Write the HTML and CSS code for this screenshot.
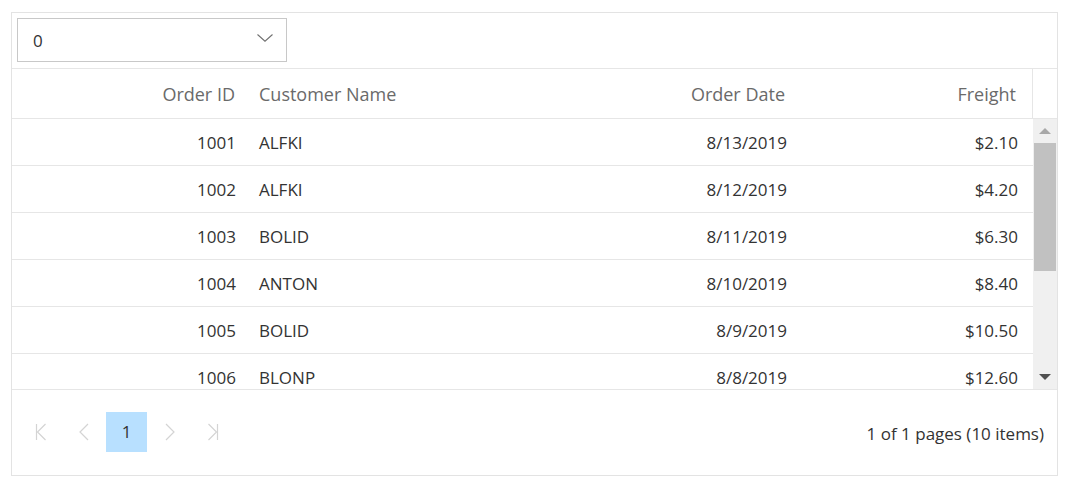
FILE: index.html
```html
<!DOCTYPE html>
<html lang="en">
<head>
<meta charset="utf-8">
<title>Orders grid</title>
<link rel="stylesheet" href="styles.css">
</head>
<body>
<div class="grid">
  <div class="toolbar">
    <div class="dropdown">
      <span class="dd-value">0</span>
      <svg class="dd-icon" width="16" height="8" viewBox="0 0 16 8"><polyline points="0.5,0.5 8,7.2 15.5,0.5" fill="none" stroke="#707070" stroke-width="1.1"/></svg>
    </div>
  </div>
  <div class="header">
    <div class="cols hcols">
      <div class="hc c1">Order ID</div>
      <div class="hc c2">Customer Name</div>
      <div class="hc c3">Order Date</div>
      <div class="hc c4">Freight</div>
    </div>
    <div class="hspacer"></div>
  </div>
  <div class="content">
    <div class="rows">
      <div class="cols row"><div class="dc c1">1001</div><div class="dc c2">ALFKI</div><div class="dc c3">8/13/2019</div><div class="dc c4">$2.10</div></div>
      <div class="cols row"><div class="dc c1">1002</div><div class="dc c2">ALFKI</div><div class="dc c3">8/12/2019</div><div class="dc c4">$4.20</div></div>
      <div class="cols row"><div class="dc c1">1003</div><div class="dc c2">BOLID</div><div class="dc c3">8/11/2019</div><div class="dc c4">$6.30</div></div>
      <div class="cols row"><div class="dc c1">1004</div><div class="dc c2">ANTON</div><div class="dc c3">8/10/2019</div><div class="dc c4">$8.40</div></div>
      <div class="cols row"><div class="dc c1">1005</div><div class="dc c2">BOLID</div><div class="dc c3">8/9/2019</div><div class="dc c4">$10.50</div></div>
      <div class="cols row"><div class="dc c1">1006</div><div class="dc c2">BLONP</div><div class="dc c3">8/8/2019</div><div class="dc c4">$12.60</div></div>
    </div>
    <div class="vscroll">
      <div class="sb-btn"><svg width="12" height="6" viewBox="0 0 12 6"><polygon points="0,6 6,0 12,6" fill="#a8a8a8"/></svg></div>
      <div class="sb-track"><div class="sb-thumb"></div></div>
      <div class="sb-btn sb-down"><svg width="12" height="6" viewBox="0 0 12 6"><polygon points="0,0 12,0 6,6" fill="#505050"/></svg></div>
    </div>
  </div>
  <div class="pager">
    <div class="pg-nav">
      <div class="pg-btn"><svg width="12" height="18" viewBox="0 0 12 18"><line x1="1.5" y1="1" x2="1.5" y2="17" stroke="#d4d4d4" stroke-width="1.2"/><polyline points="10.5,1 2.5,9 10.5,17" fill="none" stroke="#d4d4d4" stroke-width="1.2"/></svg></div>
      <div class="pg-btn"><svg width="12" height="18" viewBox="0 0 12 18"><polyline points="10,1 2,9 10,17" fill="none" stroke="#d4d4d4" stroke-width="1.2"/></svg></div>
      <div class="pg-btn pg-current">1</div>
      <div class="pg-btn"><svg width="12" height="18" viewBox="0 0 12 18"><polyline points="2,1 10,9 2,17" fill="none" stroke="#d4d4d4" stroke-width="1.2"/></svg></div>
      <div class="pg-btn"><svg width="12" height="18" viewBox="0 0 12 18"><polyline points="1.5,1 9.5,9 1.5,17" fill="none" stroke="#d4d4d4" stroke-width="1.2"/><line x1="10.5" y1="1" x2="10.5" y2="17" stroke="#d4d4d4" stroke-width="1.2"/></svg></div>
    </div>
    <div class="pg-info">1 of 1 pages (10 items)</div>
  </div>
</div>
</body>
</html>
```
FILE: styles.css
```css
html, body {
  margin: 0;
  padding: 0;
  background: #ffffff;
}

body {
  font-family: "Open Sans", "Noto Sans", Arial, sans-serif;
  color: #333333;
  padding: 12px 0 0 11px;
}

.grid {
  width: 1045px;
  height: 462px;
  border: 1px solid #e3e3e3;
  display: flex;
  flex-direction: column;
}

.toolbar {
  height: 56px;
  flex: none;
  padding: 5px 0 0 5px;
  box-sizing: border-box;
  border-bottom: 1px solid #e6e6e6;
}

.dropdown {
  width: 270px;
  height: 44px;
  box-sizing: border-box;
  border: 1px solid #c8c8c8;
  display: flex;
  align-items: center;
  justify-content: space-between;
  padding: 0 13px 0 15px;
}

.dd-value {
  font-size: 17px;
  color: #333333;
}

.dd-icon {
  display: block;
  margin-top: -4px;
}

.header {
  display: flex;
  flex: none;
  height: 50px;
  box-sizing: border-box;
  border-bottom: 1px solid #e6e6e6;
}

.cols {
  display: grid;
  grid-template-columns: 236px 275px 276px 233px;
  width: 1020px;
}

.hcols {
  border-right: 1px solid #e6e6e6;
}

.hspacer {
  width: 24px;
}

.hc {
  font-size: 18px;
  color: #6a6a6a;
  display: flex;
  align-items: center;
  white-space: nowrap;
}

.hc.c1 { justify-content: flex-end; padding-right: 13px; }
.hc.c2 { padding-left: 11px; }
.hc.c3 { justify-content: flex-end; padding-right: 14px; }
.hc.c4 { justify-content: flex-end; padding-right: 16px; }

.content {
  display: flex;
  flex: none;
  height: 270px;
  overflow: hidden;
}

.rows {
  width: 1021px;
  overflow: hidden;
}

.row {
  width: 1021px;
  height: 47px;
  box-sizing: border-box;
  border-bottom: 1px solid #e6e6e6;
}

.dc {
  font-size: 17px;
  color: #333333;
  display: flex;
  align-items: center;
  white-space: nowrap;
}

.dc.c1 { justify-content: flex-end; padding-right: 12px; }
.dc.c2 { padding-left: 11px; }
.dc.c3 { justify-content: flex-end; padding-right: 12px; }
.dc.c4 { justify-content: flex-end; padding-right: 14px; }

.vscroll {
  width: 24px;
  background: #f0f0f0;
  display: flex;
  flex-direction: column;
}

.sb-btn {
  height: 24px;
  display: flex;
  align-items: center;
  justify-content: center;
}

.sb-btn svg { display: block; }

.sb-track {
  flex: 1;
  padding: 0 1px;
}

.sb-thumb {
  height: 128px;
  background: #c1c1c1;
}

.pager {
  flex: 1;
  border-top: 1px solid #e6e6e6;
  display: flex;
  align-items: center;
  justify-content: space-between;
  padding: 0 13px 0 8px;
}

.pg-nav {
  display: flex;
  gap: 2px;
  margin-top: -2px;
}

.pg-btn {
  width: 41px;
  height: 40px;
  display: flex;
  align-items: center;
  justify-content: center;
}

.pg-btn svg { display: block; }

.pg-current {
  background: #b8e0ff;
  font-size: 17px;
  color: #333333;
}

.pg-info {
  font-size: 17px;
  color: #333333;
  margin-top: 2px;
}
```
